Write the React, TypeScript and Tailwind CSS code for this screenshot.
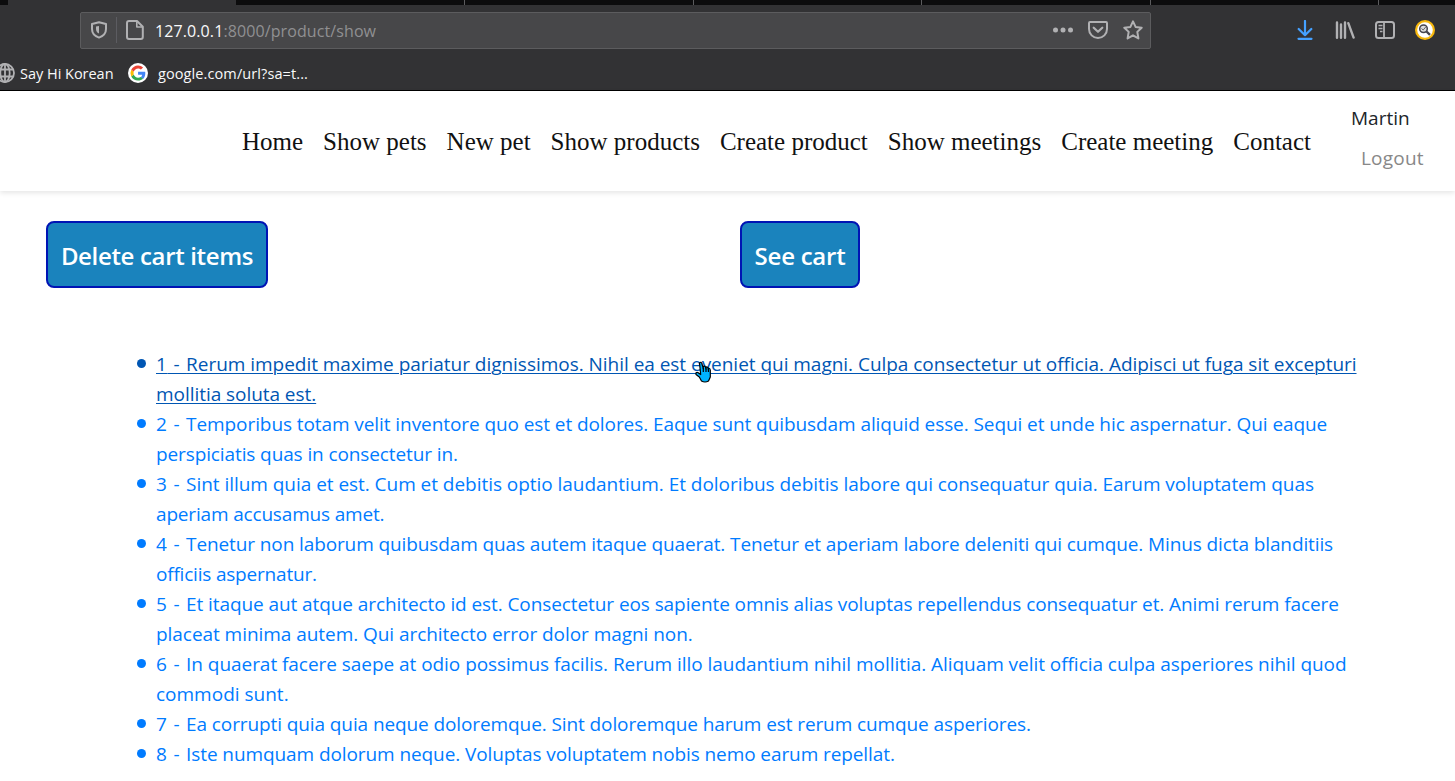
import React from "react";

const nav = ["Home", "Show pets", "New pet", "Show products", "Create product", "Show meetings", "Create meeting", "Contact"];

type Line = { text: string; tracking: string };

const items: Line[][] = [
  [
    { text: "Rerum impedit maxime pariatur dignissimos. Nihil ea est eveniet qui magni. Culpa consectetur ut officia. Adipisci ut fuga sit excepturi", tracking: "tracking-[-0.03px]" },
    { text: "mollitia soluta est.", tracking: "tracking-[-0.05px]" },
  ],
  [
    { text: "Temporibus totam velit inventore quo est et dolores. Eaque sunt quibusdam aliquid esse. Sequi et unde hic aspernatur. Qui eaque", tracking: "tracking-[-0.08px]" },
    { text: "perspiciatis quas in consectetur in.", tracking: "tracking-[-0.11px]" },
  ],
  [
    { text: "Sint illum quia et est. Cum et debitis optio laudantium. Et doloribus debitis labore qui consequatur quia. Earum voluptatem quas", tracking: "tracking-[-0.04px]" },
    { text: "aperiam accusamus amet.", tracking: "tracking-[-0.17px]" },
  ],
  [
    { text: "Tenetur non laborum quibusdam quas autem itaque quaerat. Tenetur et aperiam labore deleniti qui cumque. Minus dicta blanditiis", tracking: "tracking-[-0.11px]" },
    { text: "officiis aspernatur.", tracking: "tracking-[-0.2px]" },
  ],
  [
    { text: "Et itaque aut atque architecto id est. Consectetur eos sapiente omnis alias voluptas repellendus consequatur et. Animi rerum facere", tracking: "tracking-[-0.085px]" },
    { text: "placeat minima autem. Qui architecto error dolor magni non.", tracking: "tracking-[-0.05px]" },
  ],
  [
    { text: "In quaerat facere saepe at odio possimus facilis. Rerum illo laudantium nihil mollitia. Aliquam velit officia culpa asperiores nihil quod", tracking: "tracking-[-0.045px]" },
    { text: "commodi sunt.", tracking: "tracking-[0px]" },
  ],
  [{ text: "Ea corrupti quia quia neque doloremque. Sint doloremque harum est rerum cumque asperiores.", tracking: "tracking-[-0.1px]" }],
  [{ text: "Iste numquam dolorum neque. Voluptas voluptatem nobis nemo earum repellat.", tracking: "tracking-[-0.09px]" }],
];

function Shield() {
  return (
    <svg className="h-5 w-5" viewBox="0 0 20 20" fill="none" stroke="#b1b1b3" strokeWidth="2" strokeLinejoin="round">
      <path d="M10 2.3 L17 4 V9 C17 13.4 14 16.2 10 17.6 C6 16.2 3 13.4 3 9 V4 Z" />
      <path d="M10 6 V13.6 C7.7 12.4 7 10.8 7 9 V6.6 Z" fill="#b1b1b3" stroke="none" />
    </svg>
  );
}

function Page() {
  return (
    <svg className="h-5 w-5" viewBox="0 0 20 20" fill="none" stroke="#b1b1b3" strokeWidth="2" strokeLinejoin="round">
      <path d="M4 1 H12 L17.8 6.8 V17 Q17.8 19 15.8 19 H4 Q2 19 2 17 V3 Q2 1 4 1 Z" />
      <path d="M11.8 1 V7 H17.6" strokeWidth="1.6" />
    </svg>
  );
}

function Globe() {
  return (
    <svg className="h-5 w-5 shrink-0" viewBox="0 0 20 20" fill="none" stroke="#b1b1b3" strokeWidth="1.8">
      <circle cx="10" cy="10" r="9" />
      <ellipse cx="10" cy="10" rx="4.7" ry="9" />
      <path d="M10 1 V19 M2 6.5 H18 M2 13.5 H18" />
    </svg>
  );
}

function Google() {
  return (
    <svg className="h-5 w-5 shrink-0" viewBox="0 0 20 20">
      <circle cx="10" cy="10" r="10" fill="#fff" />
      <g transform="translate(2.5 2.5) scale(.63)">
        <path fill="#4285F4" d="M23.5 12.3c0-.9-.1-1.6-.3-2.4H12v4.6h6.5c-.1 1.1-.8 2.8-2.4 4l3.8 3c2.3-2.1 3.6-5.2 3.6-9.2Z" />
        <path fill="#34A853" d="M12 24c3.2 0 6-1.100 7.900-2.900l-3.800-2.900c-1 .7-2.400 1.200-4.100 1.200-3.200 0-5.900-2.100-6.800-5l-4 3C3.300 21.300 7.300 24 12 24Z" />
        <path fill="#FBBC05" d="M5.200 14.400a7.400 7.400 0 0 1 0-4.800l-4-3a12 12 0 0 0 0 10.800Z" />
        <path fill="#EA4335" d="M12 4.600c2.300 0 3.800 1 4.600 1.800L20 3.100C17.900 1.200 15.200 0 12 0 7.300 0 3.300 2.700 1.200 6.600l4 3c1-2.900 3.600-5 6.800-5Z" />
      </g>
    </svg>
  );
}

function Pocket() {
  return (
    <svg className="h-5 w-5" viewBox="0 0 20 20" fill="none" stroke="#b1b1b3" strokeWidth="2" strokeLinecap="round" strokeLinejoin="round">
      <path d="M2 2 H18 Q19 2 19 3 V9 A9 9 0 0 1 1 9 V3 Q1 2 2 2 Z" />
      <path d="M5.700 7.700 L10 11.800 L14.300 7.700" strokeWidth="2.200" />
    </svg>
  );
}

function Star() {
  return (
    <svg className="h-5 w-5" viewBox="0 0 20 20" fill="none" stroke="#b1b1b3" strokeWidth="2" strokeLinejoin="round">
      <path d="M10 1.400 L12.600 6.900 L18.700 7.700 L14.300 11.900 L15.400 18.400 L10 15.300 L4.600 18.400 L5.700 11.900 L1.300 7.700 L7.400 6.900 Z" />
    </svg>
  );
}

function Download() {
  return (
    <svg className="h-5 w-5" viewBox="0 0 20 20" fill="none" stroke="#45a1ff" strokeWidth="2.200" strokeLinecap="round" strokeLinejoin="round">
      <path d="M10 1 V15 M3.700 9 L10 15.200 L16.300 9 M3.500 18.800 H16.500" />
    </svg>
  );
}

function Library() {
  return (
    <svg className="h-5 w-5" viewBox="0 0 20 20" fill="none" stroke="#b1b1b3" strokeWidth="2.400" strokeLinecap="round">
      <path d="M2 2.500 V17.800 M6 4.500 V17.800 M10 2.500 V17.800 M13.300 3.200 L18.600 17.600" />
    </svg>
  );
}

function Sidebar() {
  return (
    <svg className="h-5 w-5" viewBox="0 0 20 20" fill="none" stroke="#b1b1b3" strokeWidth="2">
      <rect x="1" y="2" width="18" height="16" rx="2.500" />
      <path d="M9 2 V18" strokeWidth="1.800" />
      <path d="M3.500 5.500 H7.500 M3.500 8.500 H7.500 M5 11.500 H7.500" strokeWidth="1.300" />
    </svg>
  );
}

function SearchBadge() {
  return (
    <svg className="h-5 w-5" viewBox="0 0 20 20" fill="none">
      <circle cx="10" cy="10" r="10" fill="#f7b80d" />
      <circle cx="10" cy="10" r="7.800" fill="#fff" />
      <circle cx="8.500" cy="8.700" r="3.800" fill="#ddd" stroke="#45454d" strokeWidth="1.500" />
      <path d="M11.500 11.500 L15 14.800" stroke="#45454d" strokeWidth="2.400" />
      <path d="M6.500 8.500 L8.200 10 L10.700 7" stroke="#666" strokeWidth="1" />
    </svg>
  );
}

function Hand() {
  return (
    <svg className="pointer-events-none absolute top-[361px] left-[695px] h-[22px] w-[17px]" viewBox="0 0 17 22" fill="#00b4ff" stroke="#000" strokeWidth="1.200" strokeLinejoin="round">
      <path d="M4.500 2 Q5.500 .5 6.700 2 L8.300 7.500 V5.500 Q9.500 4.500 10.500 6 L11 8 V6 Q12.500 5.500 13 7 L13.300 8.500 L13.600 7 Q15 7 15.300 9 V16 L13.500 20 Q10 22 6.500 20 L4.300 16 L1 13.500 Q.5 11 2.800 11.500 L5.700 13.500 Z" />
      <path d="M8.300 7 V11 M11 7.500 V11 M13.400 8 V11" />
    </svg>
  );
}

export default function App() {
  return (
    <div className="relative flex h-[781px] w-[1455px] flex-col overflow-hidden bg-white font-['Open_Sans',sans-serif] text-[#212529]">
      <header className="h-[91px] shrink-0 border-b border-black bg-[#323234]">
        <div className="flex h-[5px] bg-[#0c0c0d]">
          <div className="ml-2 w-[228px] bg-[#323234]" />
          <div className="w-[229px] border-r border-[#5c5c5e]" />
          <div className="w-[229px] border-r border-[#5c5c5e]" />
          <div className="w-[228px] border-r border-[#5c5c5e]" />
          <div className="w-[229px] border-r border-[#5c5c5e]" />
          <div className="w-[228px] border-r border-[#5c5c5e]" />
        </div>
        <div className="flex h-[51px] items-start pt-[7px] pr-5 pl-20">
          <div className="flex h-[37px] w-[1071px] items-center rounded-[2px] border border-[#5c5c5e] bg-[#474749] pr-[7px] pb-px pl-2">
            <Shield />
            <div className="ml-[7px] h-[26px] w-px bg-[#5c5c61]" />
            <div className="ml-2"><Page /></div>
            <div className="mt-[3px] ml-[10px] text-[16px] leading-[21px] tracking-[0.1px] whitespace-nowrap text-[#909092]"><span className="text-[#f9f9fa]">127.0.0.1</span>:8000/product/show</div>
            <div className="ml-auto flex items-center">
              <svg className="h-5 w-5" viewBox="0 0 20 20" fill="#b1b1b3"><circle cx="2.500" cy="10" r="2.500" /><circle cx="10" cy="10" r="2.500" /><circle cx="17.500" cy="10" r="2.500" /></svg>
              <div className="ml-[15px]"><Pocket /></div>
              <div className="ml-[15px]"><Star /></div>
            </div>
          </div>
          <div className="mt-2 ml-auto flex gap-5"><Download /><Library /><Sidebar /><SearchBadge /></div>
        </div>
        <div className="flex h-[34px] items-center text-[14.5px] leading-5 text-[#f9f9fa]">
          <div className="-ml-[5px]"><Globe /></div>
          <span className="mt-[2px] ml-[5px] w-[108px] tracking-[-0.02px] whitespace-nowrap">Say Hi Korean</span>
          <Google />
          <span className="mt-[2px] ml-[10px] tracking-[0.1px] whitespace-nowrap">google.com/url?sa=t...</span>
        </div>
      </header>

      <div className="flex h-[100px] shrink-0 shadow-[0_2px_5px_rgba(0,0,0,0.1)]">
        <nav className="ml-[242px] flex w-[1109px] gap-5 pt-[37px] font-['Liberation_Serif',serif] text-[25px] leading-7 whitespace-nowrap text-[#111]">
          {nav.map((label) => <a key={label}>{label}</a>)}
        </nav>
        <div className="flex flex-col pt-[12px] text-[19px] leading-[30px]">
          <span>Martin</span>
          <span className="mt-[10px] ml-[10px] tracking-[0.2px] text-[#888]">Logout</span>
        </div>
      </div>

      <main>
        <div className="mt-[30px] ml-[46px] flex text-[24px] font-semibold text-white">
          <button className="h-[67px] w-[222px] rounded-lg border-2 border-[#0014b4] bg-[#1a83bd] pt-[3px] tracking-[-0.34px] whitespace-nowrap">Delete cart items</button>
          <button className="ml-[472px] h-[67px] w-[120px] rounded-lg border-2 border-[#0014b4] bg-[#1a83bd] pt-[3px] tracking-[-0.25px] whitespace-nowrap">See cart</button>
        </div>
        <ul className="mt-[61px] ml-[137px] text-[19px] leading-[30px] whitespace-nowrap text-[#007bff]">
          {items.map((lines, i) => (
            <li key={i} className={i === 0 ? "flex text-[#0056b3]" : "flex"}>
              <i className="mt-[10px] mr-[10px] h-[9px] w-[9px] shrink-0 rounded-full bg-current" />
              <a className={i === 0 ? "underline decoration-1 underline-offset-2" : ""}>
                {lines.map((line, n) => (
                  <span key={line.text} className={`block ${line.tracking}`}>
                    {n === 0 && <span className="tracking-[0.8px]">{i + 1} - </span>}
                    {line.text}
                  </span>
                ))}
              </a>
            </li>
          ))}
        </ul>
      </main>
      <Hand />
    </div>
  );
}
